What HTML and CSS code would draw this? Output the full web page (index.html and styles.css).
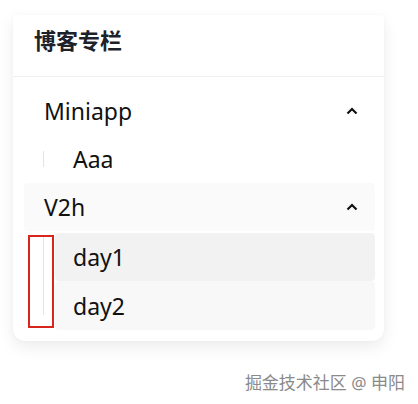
FILE: index.html
```html
<!DOCTYPE html>
<html lang="zh">
<head>
<meta charset="utf-8">
<link rel="stylesheet" href="styles.css">
</head>
<body>
<div class="card">
  <div class="card-header">博客专栏</div>
  <div class="list">
    <div class="row">
      <span class="label">Miniapp</span>
      <svg class="chev" width="12" height="8" viewBox="0 0 12 8"><path d="M1.5 6.5 L6 2 L10.5 6.5" fill="none" stroke="#111" stroke-width="2.2"/></svg>
    </div>
    <div class="group">
      <div class="rail plain"><div class="line short"></div></div>
      <div class="items">
        <div class="item">Aaa</div>
      </div>
    </div>
    <div class="row open">
      <span class="label">V2h</span>
      <svg class="chev" width="12" height="8" viewBox="0 0 12 8"><path d="M1.5 6.5 L6 2 L10.5 6.5" fill="none" stroke="#111" stroke-width="2.2"/></svg>
    </div>
    <div class="group">
      <div class="rail marked"><div class="line long"></div></div>
      <div class="items">
        <div class="item active">day1</div>
        <div class="item soft">day2</div>
      </div>
    </div>
  </div>
</div>
<div class="footer">掘金技术社区 @ 申阳</div>
</body>
</html>
```
FILE: styles.css
```css
* { box-sizing: border-box; }
html, body { margin: 0; padding: 0; background: #fff; }
body {
  font-family: "Noto Sans", "Noto Sans CJK SC", sans-serif;
  color: #111;
  width: 418px;
  height: 404px;
  overflow: hidden;
}
.card {
  margin: 15px 0 0 13px;
  width: 371px;
  background: #fff;
  border-radius: 4px 4px 12px 12px;
  box-shadow: 0 6px 16px rgba(0, 0, 0, 0.08), 0 0 3px rgba(0,0,0,0.03);
}
.card-header {
  height: 62px;
  padding: 10px 21px 0;
  font-size: 22px;
  line-height: 30px;
  font-weight: 700;
  color: #1d2129;
  border-bottom: 1px solid #f0f0f2;
}
.list {
  padding: 10px 9px 11px 11px;
}
.row {
  height: 48px;
  display: flex;
  align-items: center;
  justify-content: space-between;
  padding: 0 17px 0 20px;
  font-size: 23px;
  border-radius: 4px;
}
.row.open { background: #fafafa; }
.label { line-height: 1; }
.chev { display: block; }
.group {
  display: flex;
}
.rail {
  width: 26px;
  margin-left: 4px;
  flex: none;
  display: flex;
}
.rail.plain { align-items: center; }
.rail.marked {
  margin-top: 4px;
  margin-bottom: 2px;
  border: 2px solid #d8261c;
  align-items: flex-start;
}
.line {
  width: 1px;
  background: #e4e4e4;
  margin-left: 15px;
}
.rail.marked .line { margin-left: 13px; }
.line.short { height: 16px; }
.line.long { height: 78px; }
.items {
  flex: 1;
  margin-left: 1px;
}
.item {
  height: 48px;
  display: flex;
  align-items: center;
  padding-left: 18px;
  font-size: 23px;
  border-radius: 4px;
}
.item.active { background: #f2f2f2; margin-top: 2px; }
.item.soft { background: #f8f8f8; height: 49px; }
.footer {
  margin-top: 30px;
  padding-right: 13px;
  text-align: right;
  font-size: 17px;
  line-height: 24px;
  color: #8a8a8a;
  text-shadow: 0 0 2px #fff;
}
```
